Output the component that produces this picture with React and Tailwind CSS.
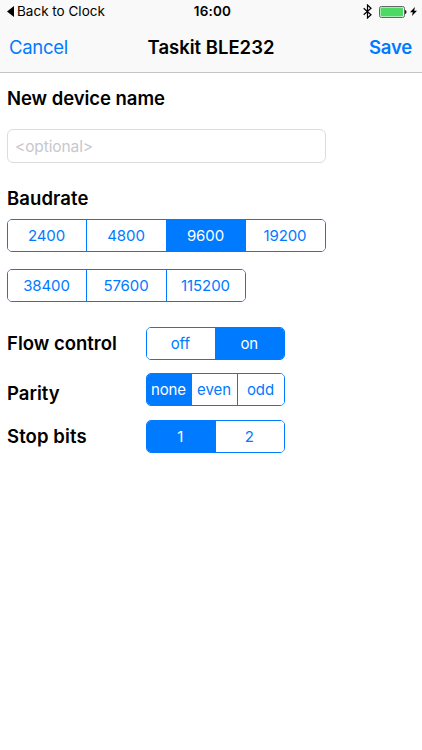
import React, { useState } from 'react';
import clsx from 'clsx';

const baudrates = [
    ['2400', '4800', '9600', '19200'],
    ['38400', '57600', '115200'],
];

function StatusBar() {
    return (
        <div className="grid h-[23px] grid-cols-[1fr_auto_1fr] items-center pl-[7px] pr-[5px] text-black">
            <div className="flex items-center">
                <svg className="mr-[3px] h-[11px] w-[7px]" viewBox="0 0 7 11" fill="currentColor">
                    <path d="M7 0v11L0 5.5z" />
                </svg>
                <span className="text-[13.5px] leading-none">Back to Clock</span>
            </div>
            <span className="pl-px text-[13.5px] font-semibold leading-none tracking-[0.2px]">16:00</span>
            <div className="flex items-center justify-end">
                <svg className="h-[15px] w-[9px]" viewBox="0 0 9 15" fill="none" stroke="currentColor" strokeWidth="1.2">
                    <path d="M0.7 4.2 8 10.8 4.5 14V1L8 4.2 0.7 10.8" />
                </svg>
                <svg className="ml-[7px] h-[12px] w-[28px]" viewBox="0 0 28 12">
                    <rect x="0.5" y="0.5" width="25" height="11" rx="1.8" fill="#fff" stroke="#666" />
                    <rect x="1.5" y="1.5" width="22.5" height="9" rx="0.8" fill="#4cd964" />
                    <path d="M26 4c2 .5 2 3.5 0 4z" fill="#222" />
                </svg>
                <svg className="ml-[3px] h-[9px] w-[7px]" viewBox="0 0 7 9" fill="currentColor">
                    <path d="M4.9 0 0 5.3H2.8L2 9 7 3.7H4.2z" />
                </svg>
            </div>
        </div>
    );
}

function Segmented({ options, value, onChange, className, columns }) {
    return (
        <div className={clsx('grid h-[33px] divide-x divide-[#007aff] overflow-hidden rounded-[5px] border border-[#007aff]', columns, className)}>
            {options.map((option) => (
                <button
                    key={option}
                    onClick={() => onChange(option)}
                    className={clsx('pr-px text-[15px] leading-none tracking-[-0.1px]', option === value ? 'bg-[#007aff] text-white' : 'bg-white text-[#007aff]')}
                >
                    {option}
                </button>
            ))}
        </div>
    );
}

function Label({ children, className }) {
    return <h2 className={clsx('text-[18.5px] font-semibold leading-6 text-black', className)}>{children}</h2>;
}

function App() {
    const [name, setName] = useState('');
    const [baudrate, setBaudrate] = useState('9600');
    const [flow, setFlow] = useState('on');
    const [parity, setParity] = useState('none');
    const [stopBits, setStopBits] = useState('1');

    return (
        <div className="min-h-screen bg-white font-['Inter',sans-serif]">
            <header className="h-[73px] border-b border-[#c4c4c6] bg-[#f9f9f9]">
                <StatusBar />
                <div className="grid h-[49px] grid-cols-[1fr_auto_1fr] items-center pl-[9px] pr-[10px] text-[18.5px]">
                    <button className="text-left tracking-[-0.3px] text-[#007aff]">Cancel</button>
                    <h1 className="pl-px font-semibold text-black">Taskit BLE232</h1>
                    <button className="text-right font-semibold tracking-[-0.2px] text-[#007aff]">Save</button>
                </div>
            </header>

            <main className="px-[7px] pt-[13px]">
                <Label className="tracking-[-0.05px]">New device name</Label>
                <input
                    value={name}
                    onChange={(e) => setName(e.target.value)}
                    placeholder="<optional>"
                    className="mt-[19px] block h-[34px] w-[319px] rounded-[6px] border border-[#dcdcdc] px-[7px] text-[15.5px] tracking-[-0.1px] text-black placeholder:text-[#c7c7cd]"
                />

                <Label className="mt-[23px] tracking-[0.1px]">Baudrate</Label>
                <Segmented options={baudrates[0]} value={baudrate} onChange={setBaudrate} columns="grid-cols-[79px_80px_79px_1fr]" className="mt-[9px] w-[319px]" />
                <Segmented options={baudrates[1]} value={baudrate} onChange={setBaudrate} columns="grid-cols-[79px_80px_1fr]" className="mt-[17px] w-[239px]" />

                <div className="mt-[25px] flex">
                    <Label className="mt-[4px] w-[139px]">Flow control</Label>
                    <Segmented options={['off', 'on']} value={flow} onChange={setFlow} columns="grid-cols-2" className="w-[139px]" />
                </div>
                <div className="mt-[13px] flex">
                    <Label className="mt-[8px] w-[139px]">Parity</Label>
                    <Segmented options={['none', 'even', 'odd']} value={parity} onChange={setParity} columns="grid-cols-[45px_46px_1fr]" className="w-[139px]" />
                </div>
                <div className="mt-[14px] flex">
                    <Label className="mt-[4px] w-[139px] tracking-[0.1px]">Stop bits</Label>
                    <Segmented options={['1', '2']} value={stopBits} onChange={setStopBits} columns="grid-cols-2" className="w-[139px]" />
                </div>
            </main>
        </div>
    );
}

export default App;
